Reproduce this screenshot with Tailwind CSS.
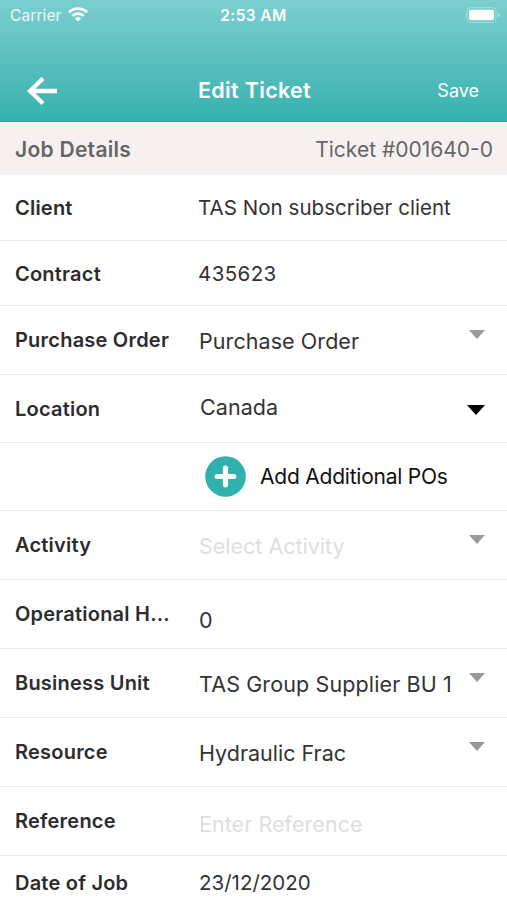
<!DOCTYPE html>
<html lang="en">
<head>
<meta charset="utf-8">
<title>Edit Ticket</title>
<script src="https://cdn.jsdelivr.net/npm/@tailwindcss/browser@4"></script>
</head>
<body class="bg-white">
<div class="w-[507px] h-[900px] overflow-hidden flex flex-col font-['Inter','Liberation_Sans',sans-serif] text-[#333] whitespace-nowrap">
  <header class="h-[122px] shrink-0 bg-linear-to-b from-[#7bced0] to-[#32b1ae] text-white">
    <div class="h-[30px] grid grid-cols-3 items-center pl-[10px] pr-[7px]">
      <div class="flex items-center gap-[6px]">
        <span class="pt-px text-[15.5px] tracking-[0.1px] text-white/85">Carrier</span>
        <svg class="w-5 h-[15px] -mt-px" viewBox="0 0 20 15" fill="none" stroke="#fff" stroke-width="2.7"><path d="M1 5.3a12.8 12.8 0 0 1 18 0M4.3 8.9a8.1 8.1 0 0 1 11.4 0"/><path d="M10 14.4 6.8 11.2a4.6 4.6 0 0 1 6.4 0z" fill="#fff" stroke="none"/></svg>
      </div>
      <span class="pt-px text-center text-[15.5px] font-semibold tracking-[0.4px] -ml-[3px]">2:53 AM</span>
      <svg class="w-[34px] h-4 -mt-px justify-self-end" viewBox="0 0 34 16"><rect x="1" y=".7" width="29" height="14.8" rx="4.5" fill="none" stroke="#fff" stroke-opacity=".4"/><rect x="3" y="2.8" width="25" height="10.4" rx="2.5" fill="#fff"/><path d="M31.8 5.5v5c1.3-.5 1.8-1.400 1.800-2.500s-.5-2-1.800-2.500z" fill="#fff" fill-opacity=".45"/></svg>
    </div>
    <div class="h-[92px] grid grid-cols-[1fr_auto_1fr] items-center pt-[30px] pl-[27px] pr-[28px]">
      <svg class="w-8 h-[28px]" viewBox="0 0 32 28" fill="none" stroke="#fff" stroke-width="4.3"><path d="M30 14H3M16 1.500 3 14l13 12.500"/></svg>
      <span class="text-[21.5px] font-semibold tracking-[0.32px] ml-[3px] -mt-[2px]">Edit Ticket</span>
      <span class="justify-self-end text-[18px] -mt-[2px]">Save</span>
    </div>
  </header>
  <div class="h-[53px] shrink-0 bg-[#f6f1f0] flex items-center justify-between pt-[3px] pl-[15px] pr-[14px] text-[#666]">
    <span class="text-[21px] font-semibold tracking-[0.28px]">Job Details</span>
    <span class="text-[21px]">Ticket #001640-0</span>
  </div>
  <main class="flex flex-col text-[20.5px]">
    <div class="h-[66px] flex items-center border-b border-[#e9e9e9] pl-[15px] pt-[2px]"><span class="w-[183px] -mt-px text-[#2c2c2e] text-[20px] tracking-[0.22px] font-semibold">Client</span><span class="tracking-[0.05px]">TAS Non subscriber client</span></div>
    <div class="h-[65px] flex items-center border-b border-[#e9e9e9] pl-[15px] pt-[2px]"><span class="w-[183px] -mt-px text-[#2c2c2e] text-[20px] tracking-[0.22px] font-semibold">Contract</span><span class="tracking-[0.4px]">435623</span></div>
    <div class="h-[69px] flex items-center border-b border-[#e9e9e9] pl-[15px]"><span class="w-[184px] text-[#2c2c2e] text-[20px] tracking-[0.22px] font-semibold">Purchase Order</span><span class="grow pt-[2px] text-[21.5px] tracking-[0.07px]">Purchase Order</span><svg class="w-4 h-[9px] mr-[22px] mb-[12px]" viewBox="0 0 16 9"><path d="M0 0h16L8 9z" fill="#999"/></svg></div>
    <div class="h-[68px] flex items-center border-b border-[#e9e9e9] pl-[15px]"><span class="w-[185px] text-[#2c2c2e] text-[20px] tracking-[0.22px] font-semibold">Location</span><span class="grow -mt-[2px] text-[21.5px] tracking-[0.07px]">Canada</span><svg class="w-[18px] h-[10px] mr-[22px] mt-[3px]" viewBox="0 0 18 10"><path d="M0 0h18L9 10z" fill="#000"/></svg></div>
    <div class="h-[68px] flex items-center border-b border-[#e9e9e9] pl-[205px] gap-[14px]">
      <svg class="w-[41px] h-[41px]" viewBox="0 0 41 41"><circle cx="20.500" cy="20.500" r="20.300" fill="#30b1ae"/><path d="M20.500 12.200v16.600M12.200 20.500h16.600" stroke="#fff" stroke-width="5.200" stroke-linecap="round"/></svg>
      <span class="text-[21px] tracking-[-0.22px] text-[#111]">Add Additional POs</span>
    </div>
    <div class="h-[69px] flex items-center border-b border-[#e9e9e9] pl-[15px]"><span class="w-[184px] text-[#2c2c2e] text-[20px] tracking-[0.22px] font-semibold">Activity</span><span class="grow pt-[2px] text-[21.5px] text-[#dedede]">Select Activity</span><svg class="w-4 h-[9px] mr-[22px] mb-[12px]" viewBox="0 0 16 9"><path d="M0 0h16L8 9z" fill="#999"/></svg></div>
    <div class="h-[69px] flex items-center border-b border-[#e9e9e9] pl-[15px]"><span class="w-[184px] text-[#2c2c2e] text-[20px] tracking-[0.22px] font-semibold">Operational H...</span><span class="pt-[12px] text-[21.5px]">0</span></div>
    <div class="h-[69px] flex items-center border-b border-[#e9e9e9] pl-[15px]"><span class="w-[184px] text-[#2c2c2e] text-[20px] tracking-[0.22px] font-semibold">Business Unit</span><span class="grow pt-[2px] text-[21.5px] tracking-[0.12px]">TAS Group Supplier BU 1</span><svg class="w-4 h-[9px] mr-[22px] mb-[12px]" viewBox="0 0 16 9"><path d="M0 0h16L8 9z" fill="#999"/></svg></div>
    <div class="h-[69px] flex items-center border-b border-[#e9e9e9] pl-[15px]"><span class="w-[184px] text-[#2c2c2e] text-[20px] tracking-[0.22px] font-semibold">Resource</span><span class="grow pt-[2px] text-[21.5px]">Hydraulic Frac</span><svg class="w-4 h-[9px] mr-[22px] mb-[12px]" viewBox="0 0 16 9"><path d="M0 0h16L8 9z" fill="#999"/></svg></div>
    <div class="h-[69px] flex items-center border-b border-[#e9e9e9] pl-[15px]"><span class="w-[184px] text-[#2c2c2e] text-[20px] tracking-[0.22px] font-semibold">Reference</span><span class="pt-[7px] text-[21.5px] tracking-[0.05px] text-[#dedede]">Enter Reference</span></div>
    <div class="h-[54px] flex items-center pl-[15px] pt-px"><span class="w-[184px] -mt-px text-[#2c2c2e] text-[20px] tracking-[0.22px] font-semibold">Date of Job</span><span>23/12/2020</span></div>
  </main>
</div>
</body>
</html>
